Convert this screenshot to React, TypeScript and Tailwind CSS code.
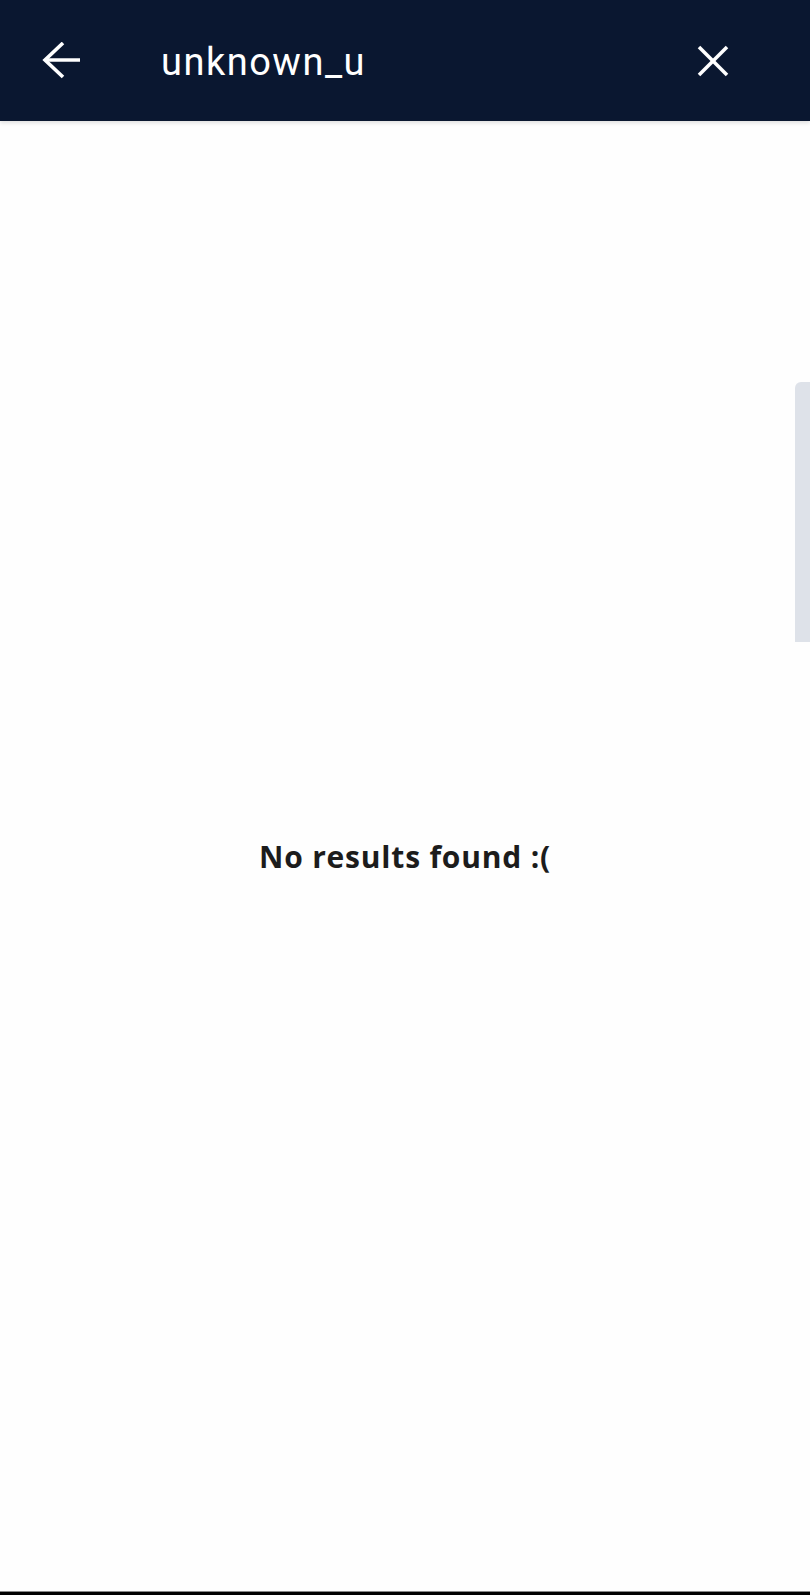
import React from "react";

export default function App() {
  return (
    <div className="relative w-[810px] h-[1595px] bg-[#fefefe] overflow-hidden" style={{ fontFamily: "Roboto, 'Open Sans', sans-serif" }}>
      <header className="relative z-10 h-[121px] bg-[#0a1730] flex items-center shadow-[0_2px_4px_rgba(0,0,0,0.12)]">
        <div className="w-[161px] pl-[42px] flex items-center">
          <svg width="40" height="38" viewBox="0 0 40 38" fill="none" stroke="white" strokeWidth="3.6" strokeLinecap="butt" strokeLinejoin="miter">
            <path d="M38 18H3" />
            <path d="M21 1L3 18L21 35" />
          </svg>
        </div>
        <div className="flex-1 text-white text-[38px] tracking-[1.5px] leading-none pt-[2px]" style={{ fontFamily: "Roboto, sans-serif", fontWeight: 400 }}>
          unknown_u
        </div>
        <div className="w-[113px] flex items-center">
          <svg width="32" height="32" viewBox="0 0 32 32" fill="none" stroke="white" strokeWidth="3.6">
            <path d="M2 2L30 30" />
            <path d="M30 2L2 30" />
          </svg>
        </div>
      </header>

      <main className="h-[1470px] flex items-center justify-center">
        <p
          className="text-[30px] font-bold text-[#1c1c1c] tracking-[0.8px]"
          style={{ fontFamily: "'Open Sans', sans-serif" }}
        >
          No results found :(
        </p>
      </main>

      <div className="absolute right-0 top-[382px] w-[15px] h-[260px] bg-[#dee2e9] rounded-tl-[6px]" />

      <div className="absolute left-0 right-0 bottom-0 h-[4px] bg-black border-t border-[#888]" />
    </div>
  );
}
